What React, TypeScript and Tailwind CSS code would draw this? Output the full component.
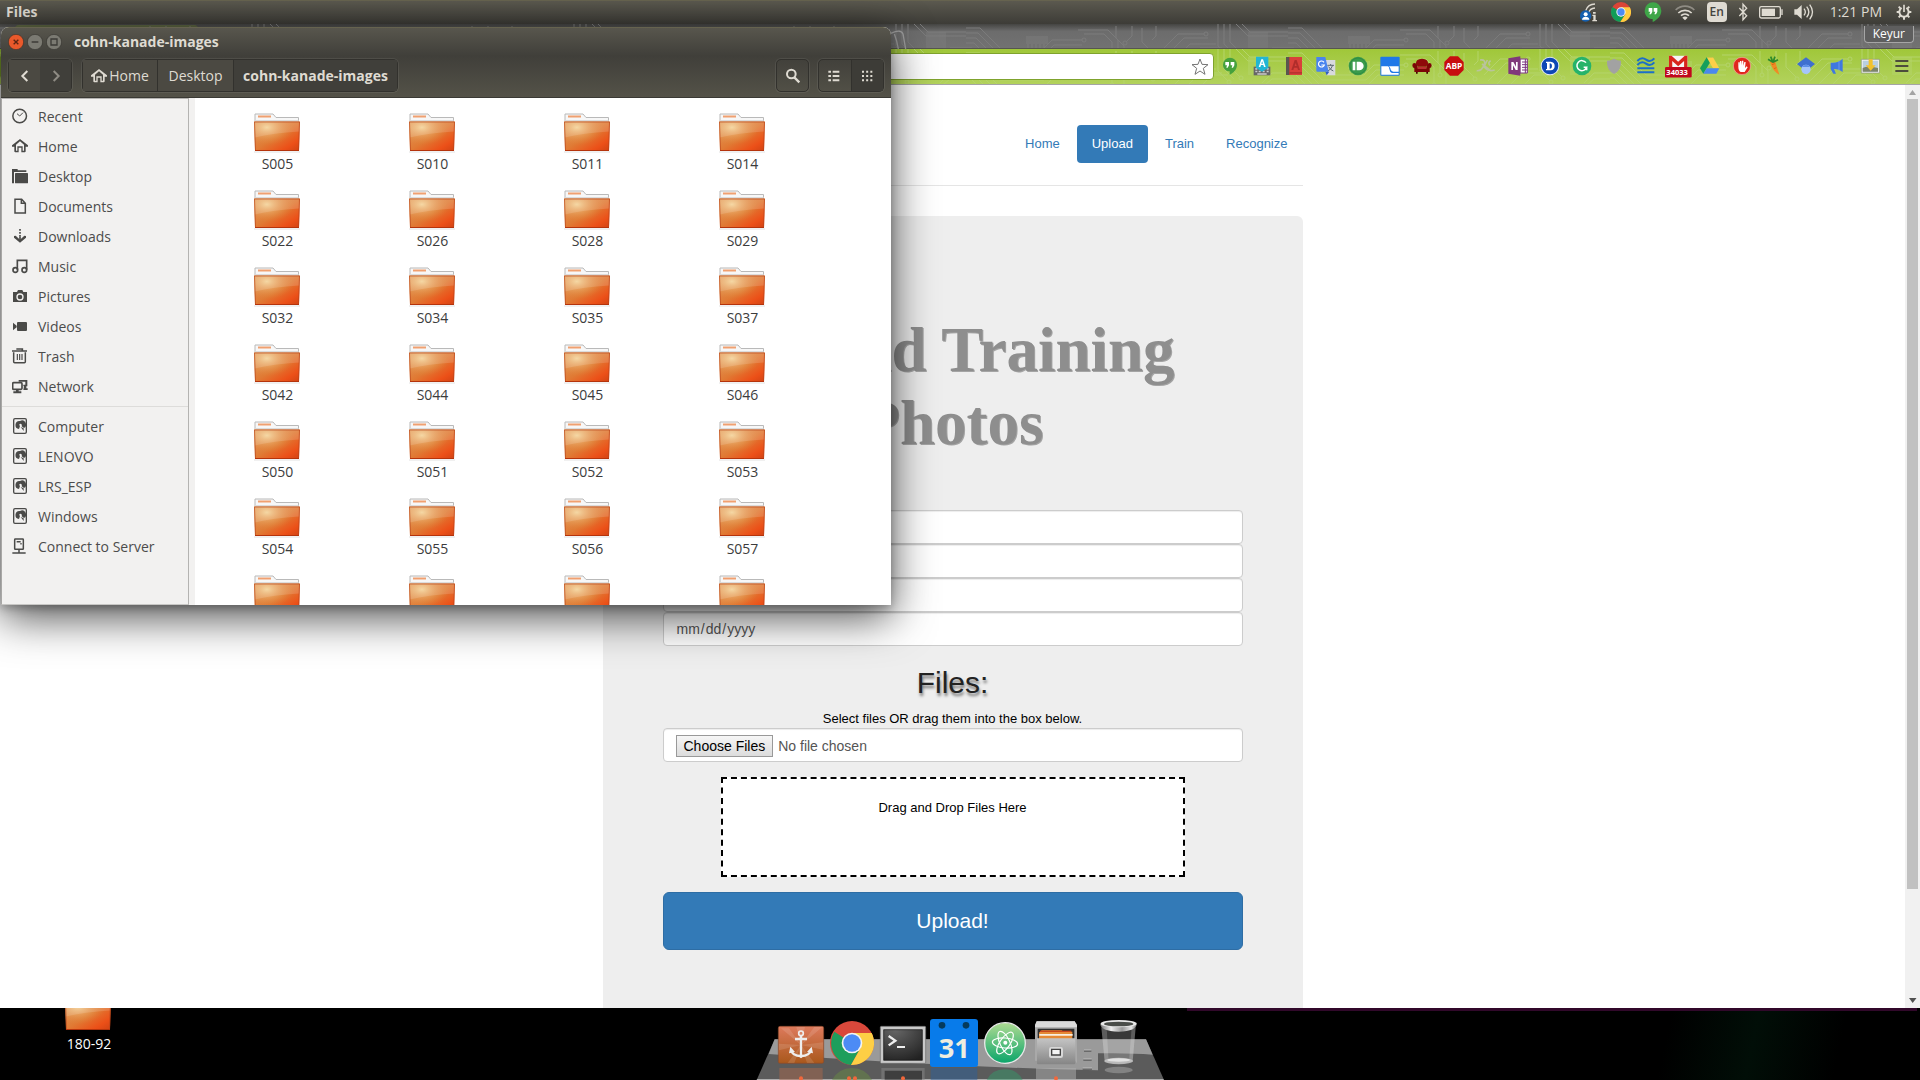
import type { ReactNode } from "react";

const INK = "#4a4a48";

/* ---------- shared drawings ---------- */

function Circuit({ id, color }: { id: string; color: string }) {
  return (
    <svg className="pointer-events-none absolute inset-0 size-full" aria-hidden="true">
      <defs>
        <pattern id={id} width="322" height="64" patternUnits="userSpaceOnUse">
          <g fill="none" stroke={color} strokeWidth="1">
            <path d="M0 4h14l22 22h40l10-10h30M0 9h12l22 22h44l10-10h28M0 14h10l22 22h48l10-10h26M0 19h8l26 26h60M0 24h6l26 26h70M0 29h4l24 24h90" />
            <path d="M112 6h30l10 10v8M118 10h20l8 8v16M150 2v12l8 8v14M166 2v10l-6 6M176 4v14l10 10M190 2v10l-4 4M196 26l16-16h26M200 32l18-18h24M206 38l18-18h26M214 44l20-20h22M222 50l24-24h16" />
            <path d="M252 0v22l10 10M258 0v20l10 10M264 0v18l10 10M270 0l12 12h40M276 0l8 8h38M296 34l10-10h16M292 42l14-12h16M286 54l18-18h18M130 60l20-20h36l14 20M136 62l18-16h26l12 16" />
            <path d="M62 20v4M66 20v4M70 20v4M74 20v4M78 20v4" />
            <circle cx="118" cy="16" r="2" /><circle cx="152" cy="26" r="2" /><circle cx="146" cy="36" r="2" />
            <circle cx="158" cy="38" r="2" /><circle cx="187" cy="30" r="2" /><circle cx="159" cy="19" r="2" />
            <circle cx="240" cy="10" r="2" /><circle cx="263" cy="33" r="2" /><circle cx="275" cy="29" r="2" />
          </g>
          <path d="M282 8h20v18h-20zM60 12h22v8H60z" fill={color} opacity=".5" />
        </pattern>
      </defs>
      <rect width="100%" height="100%" fill={`url(#${id})`} />
    </svg>
  );
}

function FolderIcon() {
  return (
    <svg viewBox="0 0 48 40" className="h-10 w-12 shrink-0" aria-hidden="true">
      <path d="M1 38.5h46v1H1z" fill="#000" opacity=".12" />
      <path d="M2 9V1h18l3 3.500h22.500V12H2z" fill="#f7f7f7" stroke="#b9b9b9" />
      <path d="M5 2.500h13v2H5z" fill="#f0a070" />
      <path d="M2.500 7h43v2h-43z" fill="#dcdcdc" />
      <path d="M1 8.500h46l-1 29.500H2z" fill="url(#folderFill)" />
      <path d="M1 8.500h46l-1 29.500H2z" fill="url(#folderGlow)" />
      <path d="M1.500 9h45l-.3 9.500Q20 20 1.800 24.500z" fill="#fff" opacity=".14" />
      <path d="M1.500 9h45l-1 28.500h-43z" fill="none" stroke="#b8441a" strokeOpacity=".65" />
      <path d="M2 37.500h44" stroke="#b5340c" />
    </svg>
  );
}

function Svg({ children, box = 60, size = "size-5" }: { children: ReactNode; box?: number; size?: string }) {
  return (
    <svg viewBox={`0 0 ${box} ${box}`} className={`${size} shrink-0`} aria-hidden="true">
      {children}
    </svg>
  );
}

function ChromeMark() {
  return (
    <Svg>
      <circle cx="30" cy="30" r="30" fill="#db4437" />
      <path d="M30 30 4 15A30 30 0 0 0 28 60l15-23z" fill="#109d58" />
      <path d="M30 16h26.500A30 30 0 0 1 28 60l15-23z" fill="#ffcd40" />
      <circle cx="30" cy="30" r="14" fill="#f4f4f4" />
      <circle cx="30" cy="30" r="11" fill="#4c8bf5" />
    </Svg>
  );
}

function HangoutsMark() {
  return (
    <Svg>
      <path d="M30 1a25 25 0 0 0-25 25c0 14 11 25 24 25v9c14-7 26-19 26-34A25 25 0 0 0 30 1z" fill="#3fa648" />
      <path d="M17 18h11v11l-4 8h-5l3-8h-5zM32 18h11v11l-4 8h-5l3-8h-5z" fill="#fff" />
    </Svg>
  );
}

/* ---------- top panel ---------- */

function TopPanel() {
  return (
    <header className="flex h-6 shrink-0 items-center justify-between border-t border-[#66634f] bg-gradient-to-b from-[#5b594f] to-[#3d3c37] pb-px pl-1.5 pr-2 text-[#dfdbd2]">
      <span className="text-[14px] font-bold leading-5">Files</span>
      <div className="flex items-center">
        <button aria-label="Remote login" className="mr-[6px] size-5">
          <Svg>
            <g fill="none" stroke="#dfdbd2" strokeWidth="4">
              <path d="M20 26A30 30 0 0 1 48 6M28 34a22 22 0 0 1 20-16" />
            </g>
            <path d="M42 30h8v5h-8zM40 38h10v16h4v4H40v-4h3V42h-3z" fill="#dfdbd2" />
            <circle cx="20" cy="42" r="17" fill="#1560b0" />
            <circle cx="20" cy="37" r="6" fill="#fff" />
            <path d="M9 53c0-12 22-12 22 0z" fill="#fff" />
          </Svg>
        </button>
        <button aria-label="Chrome" className="mx-[6px] size-5"><ChromeMark /></button>
        <button aria-label="Hangouts" className="mx-[6px] size-5"><HangoutsMark /></button>
        <button aria-label="Wi-Fi" className="mx-[6px] size-5">
          <Svg>
            <g fill="none" strokeWidth="5">
              <path d="M2 24a40 40 0 0 1 56 0" stroke="#8f8c84" />
              <path d="M10 33a29 29 0 0 1 40 0" stroke="#dfdbd2" />
              <path d="M18 41a18 18 0 0 1 24 0" stroke="#dfdbd2" />
            </g>
            <path d="m30 55-8-8q8-7 16 0z" fill="#dfdbd2" />
          </Svg>
        </button>
        <button aria-label="Keyboard layout" className="ml-[6px] h-5 w-5 rounded-sm bg-[#dfdbd2] text-center text-[12px] font-semibold leading-5 text-[#45443f]">En</button>
        <button aria-label="Bluetooth" className="mx-[6px] size-5">
          <Svg>
            <path d="m19 18 22 23-11 12V7l11 12-22 23" fill="none" stroke="#dfdbd2" strokeWidth="4" />
          </Svg>
        </button>
        <button aria-label="Battery" className="h-5 w-6">
          <svg viewBox="0 0 72 60" className="h-5 w-6" aria-hidden="true">
            <rect x="2" y="14" width="62" height="34" rx="5" fill="none" stroke="#dfdbd2" strokeWidth="4" />
            <path d="M8 20h40v22H8z" fill="#dfdbd2" />
            <path d="M67 22h4v17h-4z" fill="#dfdbd2" />
          </svg>
        </button>
        <button aria-label="Volume" className="ml-[11px] size-5">
          <Svg>
            <path d="M1 22h8l14-13v42L9 38H1z" fill="#dfdbd2" />
            <path d="M30 20q8 10 0 20M38 14q13 16 0 32M47 8q17 22 0 44" fill="none" stroke="#dfdbd2" strokeWidth="4" />
          </Svg>
        </button>
        <time className="ml-4 text-[14px] leading-5">1:21 PM</time>
        <button aria-label="Session" className="ml-[14px] size-4">
          <Svg box={48} size="size-4">
            <g stroke="#dfdbd2" fill="none">
              <path d="M17 12a14 14 0 1 0 14 0" strokeWidth="6" />
              <path d="M24 2v22" strokeWidth="5" />
              <path d="M24 38v9M2 24h8M38 24h8M8 8l6 6M34 14l6-6M8 40l6-6M40 40l-6-6" strokeWidth="6" />
            </g>
          </Svg>
        </button>
      </div>
    </header>
  );
}

/* ---------- browser chrome ---------- */

const extensions: { name: string; icon: ReactNode }[] = [
  { name: "Hangouts", icon: <Svg><path d="M30 5A21 21 0 0 0 9 26c0 12 9 20 20 20v10c12-6 22-16 22-30A21 21 0 0 0 30 5z" fill="#45a13c" /><path d="M16 18h11v10l-4 7h-4l2-7h-5zM32 18h11v10l-4 7h-4l2-7h-5z" fill="#fff" /></Svg> },
  { name: "Input tools", icon: <Svg><path d="M5 32h50v26H5z" fill="#666" /><path d="M10 36h6v5h-6zM44 36h6v5h-6zM10 44h6v5h-6zM20 44h6v5h-6zM32 44h6v5h-6zM44 44h6v5h-6zM16 52h28v4H16z" fill="#ccc" /><path d="M12 2h37v34l-19 11-18-11z" fill="#22b5d4" /><path d="m20 33 8-23h5l8 23h-5l-2-6h-7l-2 6zm8-10h5l-2.500-7z" fill="#fff" /></Svg> },
  { name: "Dictionary", icon: <Svg><path d="M6 3h48v54H6z" fill="#d9403a" /><path d="M6 3h10v54H6z" fill="#5a5550" /><path d="M16 48h38v5H16z" fill="#b93430" /><path d="m22 42 10-30h6l10 30h-6l-2-7H30l-2 7zm10-12h6l-3-9z" fill="#b02d2b" /></Svg> },
  { name: "Translate", icon: <Svg><path d="M22 12h36v46H32z" fill="#d8dade" /><path d="M34 28h20M44 24v4M50 28q-3 12-16 18M38 32q5 10 14 13" stroke="#5e6b73" strokeWidth="3" fill="none" /><path d="M1 3h27l10 44H4q-3 0-3-3z" fill="#4a84ee" /><path d="M28 47h12l-8 11z" fill="#2f5fc0" /><path d="M24 19a9 9 0 1 0 1 8h-9" fill="none" stroke="#fff" strokeWidth="3.500" /></Svg> },
  { name: "Pushbullet", icon: <Svg><circle cx="30" cy="30" r="28" fill="#3a9b4c" /><circle cx="30" cy="30" r="24" fill="none" stroke="#2b873e" strokeWidth="2" /><path d="M14 17h8v26h-8zM26 17h8a13 13 0 0 1 0 26h-8z" fill="#fff" /></Svg> },
  { name: "Boxes", icon: <Svg><rect x="1" y="2" width="58" height="57" rx="3" fill="#1f78e8" /><path d="M4 31h20q3 0 4 8 1 9 8 12h20v5H4zM27 31h29v16H40q-8-1-9-10z" fill="#fff" /></Svg> },
  { name: "Couch", icon: <Svg><path d="M12 24Q10 9 30 8q20 1 18 16l-6 8H18z" fill="#8e0a0a" /><path d="M1 28q0-7 7-7t8 8l2 10h24l2-10q1-8 8-8t7 7-6 9v11H7V37q-6-2-6-9z" fill="#7c0606" /><path d="M17 33h26v6H17z" fill="#b93030" /><path d="M12 48h5v5h-5zM43 48h5v5h-5z" fill="#400" /></Svg> },
  { name: "ABP", icon: <Svg><path d="M18 1h24l17 17v24L42 59H18L1 42V18z" fill="#c70d10" /><text x="30" y="39" textAnchor="middle" fontSize="25" fontWeight="700" fill="#fff" fontFamily="Open Sans, sans-serif">ABP</text></Svg> },
  { name: "Paused", icon: <Svg><path d="M2 44q14 2 22-16T12 12M34 12l-10 20q10 16 32 10M18 24l26 20M44 14q-10 6-2 14" fill="none" stroke="#b9c39c" strokeWidth="5" /></Svg> },
  { name: "OneNote", icon: <Svg><path d="M36 9h22v42H36z" fill="#fff" stroke="#7a3580" strokeWidth="3" /><path d="M42 18h16M42 26h16M42 34h16M42 42h16M52 9v42" stroke="#7a3580" strokeWidth="3" /><path d="m1 7 36-6v58L1 53z" fill="#80397b" /><path d="M10 42V18h6l8 14V18h5v24h-6l-8-14v14z" fill="#fff" /></Svg> },
  { name: "Dashlane", icon: <Svg><circle cx="30" cy="30" r="28" fill="#dfe6ee" /><circle cx="30" cy="30" r="25" fill="#0d47b5" /><path d="M18 17h14q12 1 12 13T32 43H18v-4h3V21h-3zm11 5v16q7 1 7-8t-7-8z" fill="#fff" fillRule="evenodd" /></Svg> },
  { name: "Grammarly", icon: <Svg><circle cx="30" cy="30" r="28" fill="#26b36a" /><path d="M42 20a15 15 0 1 0 2 14h-9M44 34v9" fill="none" stroke="#fff" strokeWidth="4.500" /></Svg> },
  { name: "Shield", icon: <Svg><path d="M30 8q10 6 21 6 2 28-21 40Q7 42 9 14q11 0 21-6z" fill="#a2a2a2" /></Svg> },
  { name: "Waves", icon: <Svg><path d="M4 15q13-14 26-4t25-4M4 27q13-14 26-4t25-4" fill="none" stroke="#1c6fc9" strokeWidth="6" /><path d="M4 37h51M4 49h51" stroke="#1c6fc9" strokeWidth="6" /></Svg> },
  { name: "Gmail", icon: <svg viewBox="0 0 82 78" className="h-[26px] w-[27px] shrink-0" aria-hidden="true"><path d="M12 8h56v36H12z" fill="#f5f5f5" /><path d="M12 8h8l20 18L60 8h8v36H58V24L40 40 22 24v20H12z" fill="#d9261c" /><rect y="42" width="81" height="32" rx="4" fill="#c1071e" /><text x="4" y="66" fontSize="23" fontWeight="700" fill="#fff" fontFamily="Open Sans, sans-serif">34033</text></svg> },
  { name: "Drive", icon: <Svg><path d="M20 4h19L19 38 10 53 0 37z" fill="#159f5c" /><path d="M20 4h19l19 33H39z" fill="#fdcf48" /><path d="m20 37h38l-9 16H10z" fill="#4a88ee" /></Svg> },
  { name: "Stop hand", icon: <Svg><circle cx="30" cy="30" r="26" fill="#e0271d" stroke="#f4b0a8" strokeWidth="2" /><path d="M19 32V19h4v10l1-14h4v13l2-14h4v15l3-11h4l-2 18 5-5 3 3-9 14H26q-7-4-7-16z" fill="#fff" /></Svg> },
  { name: "Carrot", icon: <Svg><path d="M18 18q8-8 16 0l12 38q-20-10-28-38z" fill="#f08a24" /><path d="M24 26l8-3M30 38l7-3" stroke="#c45f10" strokeWidth="2" /><path d="m27 19-15-9M27 19 20 2M27 18l6-16M27 19l15-8" stroke="#2c8a2b" strokeWidth="5" /></Svg> },
  { name: "Scholar", icon: <Svg><path d="M30 4 57 24 42 36H18L3 24z" fill="#3e6fd0" /><circle cx="30" cy="40" r="14" fill="#a5c5fb" /><path d="M18 33q12-14 24 0z" fill="#5c8fe8" /></Svg> },
  { name: "Announce", icon: <Svg><path d="M44 8v40q-10-9-24-9h-2l6 14h-8l-8-14V20q22 2 36-12z" fill="#3f78e0" /><path d="M33 14v30" stroke="#7fa8f2" strokeWidth="2" /></Svg> },
  { name: "Image downloader", icon: <Svg><path d="M4 10h54v41H4z" fill="#f7f7f2" stroke="#86907e" strokeWidth="2" /><path d="M8 14h46v33H8z" fill="#b9cfdf" /><path d="M8 36q14-8 46 0v11H8z" fill="#7c8468" /><path d="M26 10h12v18h9L32 44 17 28h9z" fill="#f2c22c" /></Svg> },
  { name: "Menu", icon: <Svg><path d="M10 15h39M10 30h39M10 45h39" stroke="#4c4c3c" strokeWidth="6" /></Svg> },
];

function BrowserChrome() {
  return (
    <>
      <div className="relative flex h-[25px] shrink-0 items-start justify-end border-b border-[#56564f] bg-gradient-to-b from-[#454543] via-[#6c6c6c] via-30% to-[#727272] pr-1.5 pt-0.5">
        <div className="absolute left-[15px] top-px h-6 w-[183px] rounded-t bg-[#5f6843]" />
        <Circuit id="circuitTabs" color="#7b7b7b" />
        <svg viewBox="0 0 60 75" className="absolute left-[891px] top-0 h-[25px] w-5" aria-hidden="true">
          <path d="M0 28q30-14 36 2 4 22 8 45M10 30q8 20 12 45" fill="none" stroke="#a0a0a0" strokeWidth="4" />
        </svg>
        <button className="relative h-[17px] rounded-b border border-t-0 border-[#a5a5a5] bg-[#5e5e5e] px-2 text-[12px] leading-4 text-white">Keyur</button>
      </div>
      <div className="relative flex h-9 shrink-0 items-center border-b border-[#a5a5a5] bg-gradient-to-b from-[#a0c739] to-[#b2d25c]">
        <Circuit id="circuitBar" color="#b4d46a" />
        <div className="relative flex h-[27px] flex-1 items-center rounded-sm border border-[#7fa32d] bg-white">
          <input aria-label="Address" className="h-full min-w-0 flex-1 bg-transparent px-2 outline-none" />
          <button aria-label="Bookmark this page" className="mr-1 size-[18px]">
            <Svg box={54} size="size-[18px]">
              <path d="m27 3 6 16 18 1-14 11 5 18-15-10-15 10 5-18L3 20l18-1z" fill="#fff" stroke="#747474" strokeWidth="3" strokeLinejoin="round" />
            </Svg>
          </button>
        </div>
        <div className="relative flex shrink-0 pb-0.5 pr-0.5">
          {extensions.map((e) => (
            <button key={e.name} aria-label={e.name} className="flex size-8 items-center justify-center">
              {e.icon}
            </button>
          ))}
        </div>
      </div>
    </>
  );
}

/* ---------- web page ---------- */

const fieldClass =
  "block h-[34px] w-full rounded border border-[#ccc] bg-white px-3 text-[14px] text-[#555] shadow-[inset_0_1px_1px_rgba(0,0,0,0.075)] outline-none";

function WebPage() {
  const links = ["Home", "Upload", "Train", "Recognize"];
  return (
    <main className="min-w-0 flex-1 overflow-hidden bg-white font-['Liberation_Sans',Arial,sans-serif] text-[13px] text-black">
      <div className="mx-auto max-w-[700px]">
        <nav className="flex justify-end gap-0.5 border-b border-[#e5e5e5] pb-[22px] pt-10">
          {links.map((l) => (
            <a
              key={l}
              href="#"
              className={
                l === "Upload"
                  ? "rounded bg-[#337ab7] px-[15px] py-[10px] leading-[18px] text-white"
                  : "rounded px-[15px] py-[10px] leading-[18px] text-[#337ab7]"
              }
            >
              {l}
            </a>
          ))}
        </nav>
        <section className="mt-[30px] rounded-md bg-[#eee] px-[60px] pb-[120px] pt-[98px] text-center">
          <h1 className="font-['Liberation_Serif',serif] text-[63px] font-bold leading-[73px] text-[#8e8e8e] [text-shadow:1px_1px_0_#a4a4a4]">
            Upload Training Photos
          </h1>
          <form className="mt-[50px]">
            <input aria-label="First name" className={fieldClass} />
            <input aria-label="Last name" className={fieldClass} />
            <input aria-label="Email" className={fieldClass} />
            <input
              aria-label="Date"
              type="date"
              className={`${fieldClass} [&::-webkit-calendar-picker-indicator]:hidden`}
            />
            <h2 className="mt-5 text-[30px] leading-[33px] text-[#222] [text-shadow:1px_3px_3px_rgba(0,0,0,0.5)]">Files:</h2>
            <label htmlFor="files" className="mt-[10px] block leading-[19px]">
              Select files OR drag them into the box below.
            </label>
            <input
              id="files"
              type="file"
              multiple
              className="block h-[34px] w-full rounded border border-[#ccc] bg-white px-3 pt-[6px] text-[14px] leading-[22px] text-[#555] shadow-[inset_0_1px_1px_rgba(0,0,0,0.075)] file:mr-[5px] file:h-[22px] file:border file:border-solid file:border-[#999] file:bg-gradient-to-b file:from-[#f6f6f6] file:to-[#dcdcdc] file:px-[7px] file:text-[14px] file:leading-5 file:text-black"
            />
            <div className="mx-auto mt-[15px] h-[100px] w-4/5 border-2 border-dashed border-black bg-white pt-[19px] leading-[19px]">
              Drag and Drop Files Here
            </div>
            <button type="button" className="mt-[15px] block h-[58px] w-full rounded-md border border-[#2e6da4] bg-[#337ab7] text-[21px] text-white">
              Upload!
            </button>
          </form>
        </section>
      </div>
    </main>
  );
}

function ScrollBar() {
  return (
    <div className="flex w-[15px] shrink-0 flex-col items-center bg-[#f1f1f1]">
      <svg viewBox="0 0 15 14" className="h-[14px] w-[15px]" aria-hidden="true"><path d="M7.500 5 11 10H4z" fill="#a3a3a3" /></svg>
      <div className="w-[11px] flex-[790] bg-[#c1c1c1]" />
      <div className="flex-[105]" />
      <svg viewBox="0 0 15 14" className="h-[14px] w-[15px]" aria-hidden="true"><path d="M4 4h7.500L7.700 9z" fill="#505050" /></svg>
    </div>
  );
}

/* ---------- file manager ---------- */

const disk = (
  <>
    <rect x="5" y="2" width="38" height="44" rx="4" fill="none" stroke={INK} strokeWidth="4" />
    <path d="M24 9a12 12 0 1 0-3 24l3-9q-5-6 2-7 6 2 3 8l7 5a12 12 0 0 0-12-21zM26 27l9 12v-8z" fill={INK} />
  </>
);

const houseShape = "M24 3 48 22v4h-7v14q0 3-3 3H28V29h-8v14H10q-3 0-3-3V26H0v-4zM24 10 12 20v18h4V25h16v13h4V20z";

const places: { name: string; icon: ReactNode }[] = [
  { name: "Recent", icon: <><circle cx="23" cy="24" r="20.500" fill="none" stroke={INK} strokeWidth="4.500" /><path d="m15 17 8 7 10-10" fill="none" stroke={INK} strokeWidth="3" /></> },
  { name: "Home", icon: <path d={houseShape} fill={INK} fillRule="evenodd" /> },
  { name: "Desktop", icon: <><path d="M0 3h17v4h26v5H6v34H0z" fill={INK} /><rect x="9" y="15" width="39" height="31" rx="2" fill={INK} /></> },
  { name: "Documents", icon: <path d="M9 4h20l11 12v29H9z M28 4v12h12" fill="none" stroke={INK} strokeWidth="4.500" /> },
  { name: "Downloads", icon: <><path d="M24 3v24" stroke={INK} strokeWidth="5" strokeDasharray="5 4" /><path d="m6 24 5-1 13 12 13-12 5 1v5L24 44 6 29z" fill={INK} /><path d="M24 26v12" stroke={INK} strokeWidth="5" /></> },
  { name: "Music", icon: <><path d="M16 35V7h28v28" fill="none" stroke={INK} strokeWidth="5" /><circle cx="10" cy="36" r="7" fill="none" stroke={INK} strokeWidth="5" /><circle cx="37" cy="36" r="7" fill="none" stroke={INK} strokeWidth="5" /></> },
  { name: "Pictures", icon: <><path d="M3 12h12l3-6h13l3 6h11v30H3z" fill={INK} /><circle cx="24" cy="27" r="9" fill="none" stroke="#f2f1f0" strokeWidth="4" /></> },
  { name: "Videos", icon: <><rect x="15" y="12" width="30" height="27" rx="3" fill={INK} /><path d="m3 14 11 9v5L3 37z" fill={INK} /></> },
  { name: "Trash", icon: <><path d="M0 9h45M13 3h18v5" fill="none" stroke={INK} strokeWidth="5" /><path d="M5 13v28q0 3 3 3h29q3 0 3-3V13" fill="none" stroke={INK} strokeWidth="4.500" /><path d="M16 18v18M23 18v18M30 18v18" stroke={INK} strokeWidth="3.500" /></> },
  { name: "Network", icon: <><rect x="2" y="14" width="28" height="20" rx="3" fill="none" stroke={INK} strokeWidth="5" /><path d="M12 34h8v6h8v6H4v-6h8zM20 6h26v19H34v-5h6V11H20zM36 25h7v6h4v5H34z" fill={INK} /></> },
];

const devices: { name: string; icon: ReactNode }[] = [
  { name: "Computer", icon: disk },
  { name: "LENOVO", icon: disk },
  { name: "LRS_ESP", icon: disk },
  { name: "Windows", icon: disk },
  { name: "Connect to Server", icon: <><rect x="8" y="3" width="26" height="31" rx="2" fill="none" stroke={INK} strokeWidth="4.500" /><path d="M14 11h12M25 17h4M21 34v10M1 45h40" stroke={INK} strokeWidth="4.500" /></> },
];

const folders = [
  "S005", "S010", "S011", "S014", "S022", "S026", "S028", "S029", "S032", "S034", "S035", "S037",
  "S042", "S044", "S045", "S046", "S050", "S051", "S052", "S053", "S054", "S055", "S056", "S057",
];

const partlyScrolled = [1, 2, 3, 4];

function PlaceList({ items }: { items: { name: string; icon: ReactNode }[] }) {
  return (
    <ul>
      {items.map((p) => (
        <li key={p.name}>
          <button className="flex h-[30px] w-full items-center gap-[10px] pl-[10px] text-left">
            <Svg box={48} size="size-4">{p.icon}</Svg>
            {p.name}
          </button>
        </li>
      ))}
    </ul>
  );
}

function FilesWindow() {
  const groove = "rounded-[5px] border border-[#32312d] shadow-[0_0_0_1px_rgba(255,255,255,0.07)]";
  return (
    <section className="absolute left-px top-[27px] flex h-[578px] w-[890px] flex-col overflow-hidden rounded-t-lg bg-white text-[14px] shadow-[0_12px_44px_rgba(0,0,0,0.7),0_3px_10px_rgba(0,0,0,0.25)]">
      <div className="flex h-[29px] shrink-0 items-center gap-[3px] border-t border-[#66634f] bg-gradient-to-b from-[#58564d] to-[#403f3a] pl-[7px]">
        <button aria-label="Close" className="size-4">
          <Svg box={48} size="size-4"><circle cx="24" cy="24" r="23" fill="#e9592b" stroke="#33322e" strokeWidth="2" /><path d="m17 17 14 14M31 17 17 31" stroke="#5b2412" strokeWidth="4" /></Svg>
        </button>
        <button aria-label="Minimize" className="size-4">
          <Svg box={48} size="size-4"><circle cx="24" cy="24" r="23" fill="#7b7a72" stroke="#33322e" strokeWidth="2" /><path d="M14 24h20" stroke="#3c3b37" strokeWidth="4" /></Svg>
        </button>
        <button aria-label="Maximize" className="size-4">
          <Svg box={48} size="size-4"><circle cx="24" cy="24" r="23" fill="#7b7a72" stroke="#33322e" strokeWidth="2" /><path d="M15 15h18v18H15z" fill="none" stroke="#3c3b37" strokeWidth="4" /></Svg>
        </button>
        <h2 className="ml-[9px] pb-px font-bold text-[#dfdbd2]">cohn-kanade-images</h2>
      </div>
      <div className="flex h-[42px] shrink-0 items-center border-b border-[#3a3934] bg-gradient-to-b from-[#403f3a] to-[#545248] px-[7px] pb-0.5 text-[#dfdbd2]">
        <div className={`flex h-[33px] w-16 ${groove}`}>
          <button aria-label="Back" className="flex flex-1 items-center justify-center bg-[#4b4942]">
            <Svg box={48} size="size-4"><path d="M31 9 16 24l15 15" fill="none" stroke="#dfdbd2" strokeWidth="6" /></Svg>
          </button>
          <button aria-label="Forward" className="flex flex-1 items-center justify-center bg-[#403f3a]">
            <Svg box={48} size="size-4"><path d="m17 9 15 15-15 15" fill="none" stroke="#8e8b83" strokeWidth="6" /></Svg>
          </button>
        </div>
        <div className={`ml-[10px] flex h-[33px] ${groove}`}>
          <button className="flex w-[75px] items-center justify-center gap-0.5 border-r border-[#32312d] bg-[#4b4942]">
            <Svg box={48} size="size-4"><path d={houseShape} fill="#dfdbd2" fillRule="evenodd" /></Svg>
            Home
          </button>
          <button className="w-[76px] border-r border-[#32312d] bg-[#4b4942]">Desktop</button>
          <button className="w-[163px] bg-[#403f3a] font-bold">cohn-kanade-images</button>
        </div>
        <button aria-label="Search" className={`ml-auto flex h-[33px] w-[33px] items-center justify-center ${groove}`}>
          <Svg box={48} size="size-4"><circle cx="19" cy="18" r="13" fill="none" stroke="#dfdbd2" strokeWidth="6" /><path d="m28 28 15 15" stroke="#dfdbd2" strokeWidth="7" /></Svg>
        </button>
        <div className={`ml-[9px] flex h-[33px] w-[66px] ${groove}`}>
          <button aria-label="List view" className="flex flex-1 items-center justify-center border-r border-[#32312d]">
            <Svg box={48} size="size-4"><path d="M4 11h8M4 24h8M4 37h8M17 11h20M17 24h20M17 37h20" stroke="#dfdbd2" strokeWidth="6" /></Svg>
          </button>
          <button aria-label="Grid view" className="flex flex-1 items-center justify-center bg-[#3d3c37]">
            <Svg box={48} size="size-4"><path d="M9 11h32M9 24h32M9 37h32" stroke="#dfdbd2" strokeWidth="6" strokeDasharray="6 6.500" /></Svg>
          </button>
        </div>
      </div>
      <div className="flex min-h-0 flex-1">
        <aside className="w-[188px] shrink-0 border border-l-[#a9a8a6] border-r-[#b4b3b1] border-b-[#c8c7c5] border-t-[#b4b3b1] bg-[#f2f1f0] pt-0.5 text-[#4c4c4c]">
          <PlaceList items={places} />
          <hr className="mb-1 mt-[5px] border-[#dddcda]" />
          <PlaceList items={devices} />
        </aside>
        <div className="w-1.5 shrink-0 bg-[#f2f1f0]" />
        <ul className="grid min-w-0 flex-1 auto-rows-[77px] grid-cols-[repeat(4,155px)] overflow-hidden pl-1 pt-[15px] text-[#3c3c3c]">
          {folders.map((f) => (
            <li key={f}>
              <button className="flex w-full flex-col items-center">
                <FolderIcon />
                <span className="pl-0.5 pt-px leading-5">{f}</span>
              </button>
            </li>
          ))}
          {partlyScrolled.map((n) => (
            <li key={n}>
              <button aria-label="Folder" className="flex w-full flex-col items-center">
                <FolderIcon />
              </button>
            </li>
          ))}
        </ul>
      </div>
    </section>
  );
}

/* ---------- desktop & dock ---------- */

function Dock() {
  return (
    <svg viewBox="30 54 1260 216" className="relative h-[72px] w-[420px]" role="img" aria-label="Dock">
      <defs>
        <linearGradient id="anchorFill" x2="0" y2="1"><stop stopColor="#dd7a5c" /><stop offset="1" stopColor="#a9581c" /></linearGradient>
        <linearGradient id="atomFill" x2="0" y2="1"><stop stopColor="#aedb92" /><stop offset="1" stopColor="#0aa56a" /></linearGradient>
        <linearGradient id="cabFill" x2="0" y2="1"><stop stopColor="#c4c4c4" /><stop offset="1" stopColor="#858585" /></linearGradient>
        <linearGradient id="metal"><stop stopColor="#777" /><stop offset=".3" stopColor="#eee" /><stop offset=".6" stopColor="#999" /><stop offset=".85" stopColor="#e5e5e5" /><stop offset="1" stopColor="#777" /></linearGradient>
        <radialGradient id="termFill" cx=".3" cy="0" r="1.100"><stop stopColor="#666" /><stop offset="1" stopColor="#222" /></radialGradient>
      </defs>
      <path d="M104 148h1114l54 122H50z" fill="#5b5b5b" />
      <path d="M104 148h970v93Q600 230 86 192z" fill="#9a9a9a" />
      <path d="M1074 148h144l20 46q-70-6-164-4z" fill="#9a9a9a" />
      <path d="M51 268h1220v2H50z" fill="#c9c9c9" />
      <g opacity=".5">
        <path d="M118 234h130v36H118z" fill="#a8674c" />
        <path d="M276 270q20-36 60-36t60 36z" fill="#678a44" />
        <path d="M424 234h130v36H424z" fill="#888" /><path d="M434 242h112v28H434z" fill="#222" />
        <path d="M572 234h140v36H572z" fill="#2d5f9b" />
        <path d="M740 270q16-32 54-32t54 32z" fill="#36976a" />
        <path d="M888 234h120v36H888z" fill="#b0b0b0" />
        <ellipse cx="1136" cy="240" rx="42" ry="10" fill="#aaa" />
      </g>
      {/* anchor */}
      <rect x="115" y="109" width="136" height="111" rx="5" fill="url(#anchorFill)" stroke="#8b4a2c" strokeWidth="2" />
      <path d="m183 165-60-50h24zM183 165l-14-54h26zM183 165l40-54h24zM183 165l66-8v22zM183 165l-66-4v20zM183 165l40 54h-22zM183 165l-40 54h20z" fill="#fff" opacity=".12" />
      <g fill="none" stroke="#eee" strokeWidth="7">
        <circle cx="183" cy="130" r="7" strokeWidth="5" /><path d="M183 138v58M165 147h36M153 180q4 18 30 18t30-18" />
      </g>
      <path d="m147 190 4-20 14 16zM219 190l-4-20-14 16zM183 205l-10-8h20z" fill="#eee" />
      {/* chrome */}
      <circle cx="336" cy="159" r="66" fill="#d9483b" />
      <path d="m336 159-53-34a66 66 0 0 0 50 100l29-52z" fill="#1e9e5c" />
      <path d="M336 129h59a66 66 0 0 1-62 96l29-52z" fill="#fdcf45" />
      <circle cx="336" cy="159" r="31" fill="#f4f4f4" /><circle cx="336" cy="159" r="26" fill="#4c8bf5" />
      {/* terminal */}
      <rect x="421" y="109" width="136" height="111" rx="3" fill="#c9c9c9" stroke="#6a6a6a" strokeWidth="2" />
      <path d="M431 119h116v92H431z" fill="url(#termFill)" stroke="#111" strokeWidth="2" />
      <path d="m446 138 20 14-20 14" fill="none" stroke="#eee" strokeWidth="7" /><path d="M471 171h24" stroke="#eee" strokeWidth="6" />
      {/* calendar */}
      <rect x="570" y="87" width="144" height="144" rx="9" fill="#087bea" />
      <circle cx="606" cy="106" r="10" fill="#053a5c" /><circle cx="678" cy="106" r="10" fill="#053a5c" />
      <text x="643" y="203" textAnchor="middle" fontSize="82" fontWeight="700" fill="#ededdf" fontFamily="Noto Sans, sans-serif">31</text>
      {/* atom */}
      <circle cx="795" cy="159" r="61" fill="url(#atomFill)" stroke="#e8e8e8" strokeWidth="4" />
      <g fill="none" stroke="#fff" strokeWidth="3.500">
        <ellipse cx="795" cy="159" rx="38" ry="15" transform="rotate(5 795 159)" />
        <ellipse cx="795" cy="159" rx="38" ry="15" transform="rotate(65 795 159)" />
        <ellipse cx="795" cy="159" rx="38" ry="15" transform="rotate(125 795 159)" />
      </g>
      <circle cx="796" cy="158" r="6" fill="#fff" />
      {/* file cabinet */}
      <path d="M890 94h114l7 18v108l-6-8H890l-5 0V112z" fill="#a9a9a9" />
      <path d="M885 104l5-10h114l7 10v8H885z" fill="#dadada" />
      <path d="M893 116h110v32H893z" fill="#2f2f2f" />
      <path d="M897 128l8-7h60l6 4h26v25H897z" fill="#e58a35" /><path d="M898 132h100v5H898z" fill="#f8efe2" /><path d="M900 122h94v4h-94z" fill="#c9461c" />
      <path d="M891 145h115v74q0 4-4 4H894q-3 0-3-4z" fill="url(#cabFill)" />
      <rect x="927" y="171" width="42" height="33" rx="7" fill="#d8d8d8" /><path d="M935 178h26v17h-26z" fill="#f5f5f5" stroke="#444" strokeWidth="4" />
      {/* separator */}
      <path d="M1032 183h22M1030 210h25M1028 237h28" stroke="#3a3a3a" strokeWidth="3" /><path d="M1032 180h22M1030 207h25M1028 234h28" stroke="#d0d0d0" strokeWidth="2" />
      {/* bin */}
      <path d="M1084 112h103l-9 102q-42 16-84 0z" fill="#bdbdbd" opacity=".3" />
      <path d="M1084 112h16l6 104-12-2zM1187 112h-12l-8 104 11-2z" fill="#fff" opacity=".18" />
      <ellipse cx="1136" cy="213" rx="43" ry="10" fill="#c9c9c9" opacity=".8" /><ellipse cx="1136" cy="210" rx="34" ry="5" fill="#f3f3f3" opacity=".7" />
      <path d="M1081 101q0 22 55 24 54-2 54-24l-8-2h-92z" fill="url(#metal)" />
      <ellipse cx="1136" cy="101" rx="54" ry="11" fill="#e8e8e8" /><ellipse cx="1136" cy="102" rx="44" ry="7" fill="#4a4d49" />
      {/* running indicators */}
      <g fill="#f2683c"><circle cx="183" cy="265" r="6" /><circle cx="327" cy="265" r="6" /><circle cx="345" cy="265" r="6" /><circle cx="489" cy="265" r="6" /><circle cx="948" cy="265" r="6" /></g>
    </svg>
  );
}

export default function App() {
  return (
    <div className="relative flex h-screen flex-col overflow-hidden bg-black font-['Open_Sans','Noto_Sans',sans-serif]">
      <svg className="absolute size-0" aria-hidden="true">
        <defs>
          <linearGradient id="folderFill" x1="0" y1="0" x2="1" y2="1">
            <stop stopColor="#e39a5c" /><stop offset=".5" stopColor="#e07a34" /><stop offset=".8" stopColor="#ec5018" /><stop offset="1" stopColor="#cf4213" />
          </linearGradient>
          <radialGradient id="folderGlow" cx=".28" cy=".2" r=".6">
            <stop stopColor="#f4d296" /><stop offset="1" stopColor="#e08a3c" stopOpacity="0" />
          </radialGradient>
        </defs>
      </svg>
      <TopPanel />
      <div className="flex min-h-0 flex-1 flex-col">
        <BrowserChrome />
        <div className="flex min-h-0 flex-1">
          <WebPage />
          <ScrollBar />
        </div>
      </div>
      <footer className="relative flex h-[72px] shrink-0 justify-center overflow-hidden">
        <div className="absolute right-[3px] top-0 h-[3px] w-[38%] bg-[#31082a]" />
        <div className="absolute right-20 top-[3px] h-full w-44 -skew-x-12 bg-gradient-to-r from-transparent via-[#010e07] to-transparent" />
        <div className="absolute -top-[16px] left-14 flex w-16 flex-col items-center">
          <FolderIcon />
          <span className="pl-0.5 text-[14px] leading-6 text-white">180-92</span>
        </div>
        <Dock />
      </footer>
      <FilesWindow />
    </div>
  );
}
